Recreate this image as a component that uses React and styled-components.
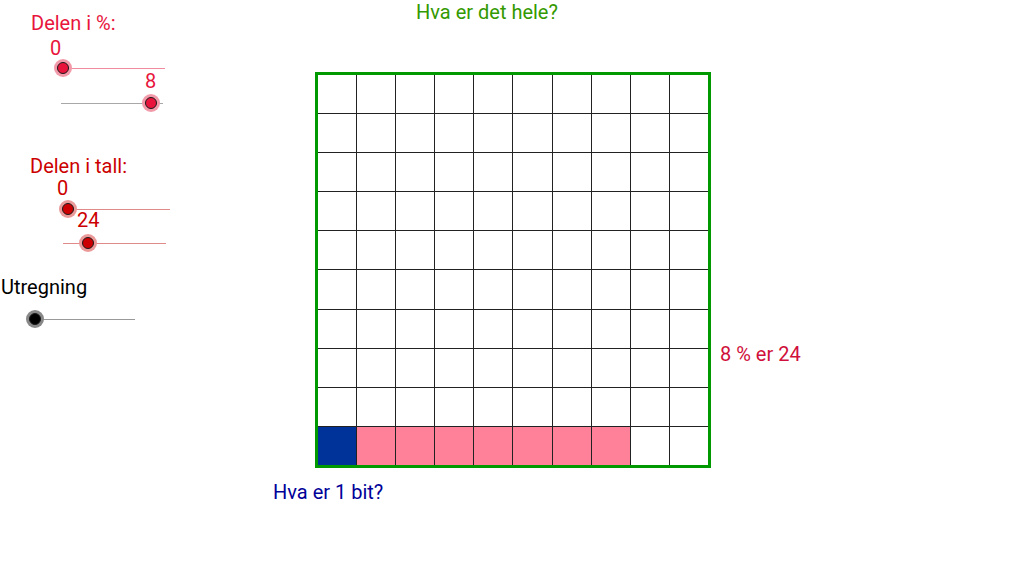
import React from "react";
import styled, { createGlobalStyle } from "styled-components";

const Global = createGlobalStyle`
  html, body { margin: 0; padding: 0; background: #fff; }
  body { font-family: Roboto, "Noto Sans", sans-serif; }
`;

const Canvas = styled.div`
  position: relative;
  width: 1024px;
  height: 572px;
  overflow: hidden;
  background: #fff;
`;

const Label = styled.div`
  position: absolute;
  left: ${(p) => p.x}px;
  top: ${(p) => p.y}px;
  font-size: 20px;
  line-height: 24px;
  color: ${(p) => p.color};
  white-space: nowrap;
`;

const SliderWrap = styled.div`
  position: absolute;
  left: ${(p) => p.x}px;
  top: ${(p) => p.y - 9}px;
  width: ${(p) => p.w}px;
  height: 18px;
`;

const Track = styled.div`
  position: absolute;
  left: 0;
  right: 0;
  top: 8.5px;
  height: 1px;
  background: ${(p) => p.color};
`;

const Knob = styled.div`
  position: absolute;
  top: 0;
  width: 18px;
  height: 18px;
  margin-left: -9px;
  border-radius: 50%;
  background: ${(p) => p.halo};
  display: flex;
  align-items: center;
  justify-content: center;
  &::after {
    content: "";
    width: 10px;
    height: 10px;
    border-radius: 50%;
    background: ${(p) => p.fill};
    border: 1px solid #1a1a1a;
  }
`;

function Slider({ x, y, w, pos, track, halo, fill }) {
  return (
    <SliderWrap x={x} y={y} w={w}>
      <Track color={track} />
      <Knob style={{ left: `${pos}px` }} halo={halo} fill={fill} />
    </SliderWrap>
  );
}

const Board = styled.div`
  position: absolute;
  left: 315px;
  top: 72px;
  width: 390px;
  height: 390px;
  border: 3px solid #009900;
  display: grid;
  grid-template-columns: repeat(10, 1fr);
  grid-template-rows: repeat(10, 1fr);
  gap: 1px;
  background: #222;
`;

const Cell = styled.div`
  background: ${(p) => p.bg};
`;

const cells = Array.from({ length: 100 }, (_, i) => {
  const row = Math.floor(i / 10);
  const col = i % 10;
  let bg = "#fff";
  if (row === 9 && col === 0) bg = "#003399";
  else if (row === 9 && col <= 7) bg = "#ff8099";
  return bg;
});

export default function App() {
  return (
    <>
      <Global />
      <Canvas>
        <Label x={416} y={0} color="#339900">Hva er det hele?</Label>

        <Label x={31} y={11} color="#e8143c">Delen i %:</Label>
        <Label x={50} y={36} color="#e8143c">0</Label>
        <Slider x={62} y={68} w={103} pos={1} track="#f08a9e" halo="#f29aaa" fill="#e8143c" />
        <Label x={145} y={69} color="#e8143c">8</Label>
        <Slider x={61} y={103} w={102} pos={90} track="#a8a8a8" halo="#f29aaa" fill="#e8143c" />

        <Label x={30} y={154} color="#cc0000">Delen i tall:</Label>
        <Label x={57} y={176} color="#cc0000">0</Label>
        <Slider x={68} y={209} w={102} pos={0} track="#e08a8a" halo="#eb9a9a" fill="#cc0000" />
        <Label x={77} y={208} color="#cc0000">24</Label>
        <Slider x={63} y={243} w={103} pos={25} track="#e08a8a" halo="#eb9a9a" fill="#cc0000" />

        <Label x={1} y={275} color="#000">Utregning</Label>
        <Slider x={35} y={319} w={100} pos={0} track="#999" halo="#888" fill="#000" />

        <Board>
          {cells.map((bg, i) => (
            <Cell key={i} bg={bg} />
          ))}
        </Board>

        <Label x={720} y={342} color="#d0103a">8 % er 24</Label>
        <Label x={273} y={480} color="#000099">Hva er 1 bit?</Label>
      </Canvas>
    </>
  );
}
